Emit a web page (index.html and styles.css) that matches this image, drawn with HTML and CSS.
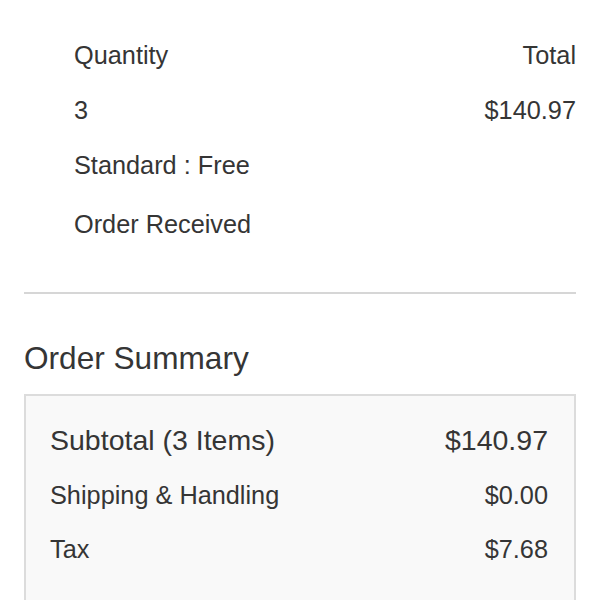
FILE: index.html
```html
<!DOCTYPE html>
<html>
<head>
<meta charset="utf-8">
<link rel="stylesheet" href="styles.css">
</head>
<body>
<div class="page">
  <div class="item">
    <div class="row"><span>Quantity</span><span>Total</span></div>
    <div class="row"><span>3</span><span>$140.97</span></div>
    <div class="row"><span>Standard : Free</span></div>
    <div class="row status"><span>Order Received</span></div>
  </div>
  <hr class="divider">
  <h2 class="title">Order Summary</h2>
  <div class="summary">
    <div class="srow big"><span>Subtotal (3 Items)</span><span>$140.97</span></div>
    <div class="srow mid"><span>Shipping &amp; Handling</span><span>$0.00</span></div>
    <div class="srow"><span>Tax</span><span>$7.68</span></div>
  </div>
</div>
</body>
</html>
```

FILE: styles.css
```css
html, body {
  margin: 0;
  padding: 0;
  background: #fff;
}
body {
  font-family: "Liberation Sans", Arial, sans-serif;
  color: #353535;
}
.page {
  padding: 0 24px;
}
.item {
  padding: 28px 0 0 50px;
}
.row {
  display: flex;
  justify-content: space-between;
  font-size: 25.3px;
  line-height: 55px;
}
.status {
  margin-top: 4px;
}
.divider {
  border: 0;
  height: 2px;
  background: #d6d6d6;
  margin: 40px 0 0;
}
.title {
  font-weight: normal;
  font-size: 31.6px;
  line-height: 40px;
  margin: 44px 0 16px;
}
.summary {
  background: #f9f9f9;
  border: 2px solid #dcdcdc;
  border-bottom: 0;
  padding: 24px 26px 20px 24px;
}
.srow {
  display: flex;
  justify-content: space-between;
  font-size: 25.3px;
  line-height: 40px;
  height: 52px;
}
.srow.big {
  font-size: 28.5px;
  height: 55px;
}
.srow.mid {
  height: 54px;
}
```
